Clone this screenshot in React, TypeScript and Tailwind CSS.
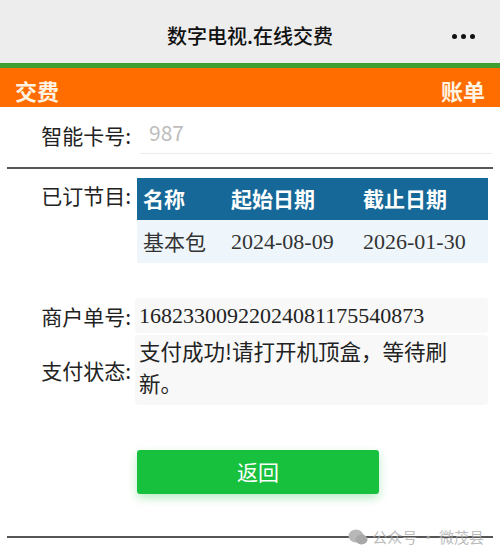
const sans = "font-['Noto_Sans_CJK_SC','Noto_Sans',sans-serif]";
const serif = "font-['Liberation_Serif','Noto_Sans_CJK_SC',serif]";

const packages = [{ name: "基本包", start: "2024-08-09", end: "2026-01-30" }];

function Label({ children }: { children: string }) {
  return (
    <div className="w-[131px] shrink-0 text-right text-[21px] leading-[30px] text-[#222]">
      {children}
    </div>
  );
}

export default function App() {
  return (
    <div className={`${sans} h-[556px] w-[500px] overflow-hidden bg-white`}>
      {/* wechat title bar */}
      <div className="relative flex h-[63px] items-center justify-center bg-[#ededed] pt-[9px]">
        <h1 className="text-[20px] font-medium text-[#111]">数字电视.在线交费</h1>
        <div className="absolute right-[25px] top-[34px] flex gap-[4px]">
          <span className="h-[5px] w-[5px] rounded-full bg-[#111]" />
          <span className="h-[5px] w-[5px] rounded-full bg-[#111]" />
          <span className="h-[5px] w-[5px] rounded-full bg-[#111]" />
        </div>
      </div>
      <div className="h-[5px] bg-[#3f9e32]" />
      <div className="flex h-[39px] items-center justify-between bg-[#ff6d00] px-[15px] pt-[6px] text-[22px] font-bold text-[#fff4e4]">
        <span>交费</span>
        <span>账单</span>
      </div>

      {/* smart card */}
      <div className="mt-[9px] flex items-center gap-[9px]">
        <Label>智能卡号:</Label>
        <div className="mr-[8px] flex-1 border-b border-[#ececec] pb-[7px] pl-[9px] pt-[2px] text-[21px] leading-[28px] text-[#bdbdbd]">
          987
        </div>
      </div>
      <div className="mx-[7px] mt-[13px] h-[2px] bg-[#555]" />

      {/* subscribed packages */}
      <div className="mt-[9px] flex gap-[6px]">
        <div className="pt-[2px]">
          <Label>已订节目:</Label>
        </div>
        <table className="w-[351px] border-collapse text-left">
          <thead>
            <tr className="h-[42px] bg-[#156897] text-[21px] font-bold text-white">
              <th className="w-[94px] pl-[6px] font-bold">名称</th>
              <th className="w-[132px] font-bold">起始日期</th>
              <th className="font-bold">截止日期</th>
            </tr>
          </thead>
          <tbody>
            {packages.map((p) => (
              <tr key={p.name} className="h-[43px] bg-[#eef6fc] text-[21px] text-[#333]">
                <td className="pl-[6px]">{p.name}</td>
                <td className={`${serif} text-[22px]`}>{p.start}</td>
                <td className={`${serif} text-[22px]`}>{p.end}</td>
              </tr>
            ))}
          </tbody>
        </table>
      </div>

      {/* order info */}
      <div className="mt-[35px] flex items-center gap-[4px]">
        <Label>商户单号:</Label>
        <div className={`${serif} mr-[12px] flex h-[35px] flex-1 items-center rounded-[4px] bg-[#f8f8f8] pl-[4px] text-[22px] text-[#222]`}>
          16823300922024081175540873
        </div>
      </div>
      <div className="mt-[2px] flex items-center gap-[4px]">
        <Label>支付状态:</Label>
        <div className="mr-[12px] h-[70px] flex-1 rounded-[4px] bg-[#f8f8f8] pl-[4px] pr-[30px] text-[21.5px] leading-[32px] text-[#222]">
          支付成功!请打开机顶盒，等待刷新。
        </div>
      </div>

      {/* back button */}
      <button className="ml-[137px] mt-[45px] h-[44px] w-[242px] rounded-[3px] bg-[#17c13e] text-[21px] text-white shadow-[0_4px_10px_rgba(23,193,62,0.3)]">
        返回
      </button>

      <div className="relative mt-[42px]">
        <div className="mx-[7px] h-[2px] bg-[#555]" />
        <div className="absolute right-[16px] top-[-10px] flex items-center gap-[4px] text-[15px] text-[#aaa]/80">
          <svg width="20" height="18" viewBox="0 0 20 18">
            <ellipse cx="8" cy="8" rx="7.5" ry="6.5" fill="#b8b8b8" />
            <ellipse cx="13.5" cy="11.5" rx="6" ry="5" fill="#a8a8a8" />
          </svg>
          <span>公众号 · 微茂县</span>
        </div>
      </div>
    </div>
  );
}
